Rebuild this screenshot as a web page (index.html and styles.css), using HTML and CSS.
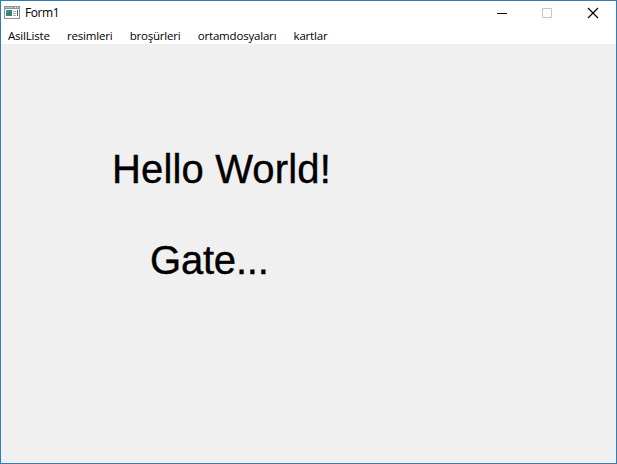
FILE: index.html
```html
<!DOCTYPE html>
<html lang="tr">
<head>
<meta charset="utf-8">
<title>Form1</title>
<link rel="stylesheet" href="styles.css">
</head>
<body>
<div class="window">
  <header class="titlebar">
    <svg class="app-icon" width="16" height="13" viewBox="0 0 16 13" shape-rendering="crispEdges">
      <path fill="#8a949d" d="M0 0h16v13H0z"/>
      <path fill="#fff" d="M1 3h14v9H1z"/>
      <path fill="#b5bdc4" d="M1 1h9v1H1z"/>
      <path fill="#fff" d="M11 1h1v1h-1zM13 1h1v1h-1z"/>
      <path fill="#368371" d="M2 4h6v6H2z"/>
      <path fill="#4b879d" d="M2 4h3v3H2z"/>
      <path fill="#a4aab0" d="M9 5h3v1H9zM9 7h3v1H9zM9 9h3v1H9z"/>
      <path fill="#42647d" d="M13 4h1v6h-1z"/>
    </svg>
    <span class="title">Form1</span>
    <div class="controls">
      <svg width="46" height="26" viewBox="0 0 46 26"><path d="M18 12.5h10" stroke="#000"/></svg>
      <svg width="46" height="26" viewBox="0 0 46 26"><path d="M17.5 7.5h9v9h-9z" fill="none" stroke="#c5c5c5"/></svg>
      <svg width="46" height="26" viewBox="0 0 46 26"><path d="M17 7l10 10M27 7l-10 10" stroke="#000" stroke-width="1.15"/></svg>
    </div>
  </header>
  <nav class="menu">
    <span>AsilListe</span><span>resimleri</span><span>broşürleri</span><span>ortamdosyaları</span><span>kartlar</span>
  </nav>
  <main class="form">
    <div class="label hello">Hello World!</div>
    <div class="label gate">Gate...</div>
  </main>
</div>
</body>
</html>
```
FILE: styles.css
```css
* { box-sizing: border-box; }
body { margin: 0; color: #000; }
.window {
  width: 617px;
  height: 464px;
  display: flex;
  flex-direction: column;
  border: 1px solid #2f7cb8;
  background: #f0f0f0;
  overflow: hidden;
}
.titlebar {
  display: flex;
  height: 26px;
  padding-left: 3px;
  background: #fff;
  font: 12px/24px "Open Sans", "Noto Sans", sans-serif;
}
.app-icon { margin-top: 5px; }
.title { margin-left: 5px; letter-spacing: -0.4px; }
.controls { display: flex; margin-left: auto; margin-right: -1px; }
.menu {
  display: flex;
  gap: 17.2px;
  height: 17px;
  padding-left: 7px;
  background: #fff;
  font: 11.5px/17px "Open Sans", "Noto Sans", sans-serif;
  letter-spacing: -0.19px;
}
.form { flex: 1; }
.label {
  font: 40px/46px "Liberation Sans", Arial, sans-serif;
  white-space: nowrap;
  -webkit-text-stroke: 0.4px #000;
}
.hello { margin: 102px 0 0 111px; letter-spacing: 0.15px; }
.gate { margin: 45px 0 0 149px; letter-spacing: -0.2px; }
```
